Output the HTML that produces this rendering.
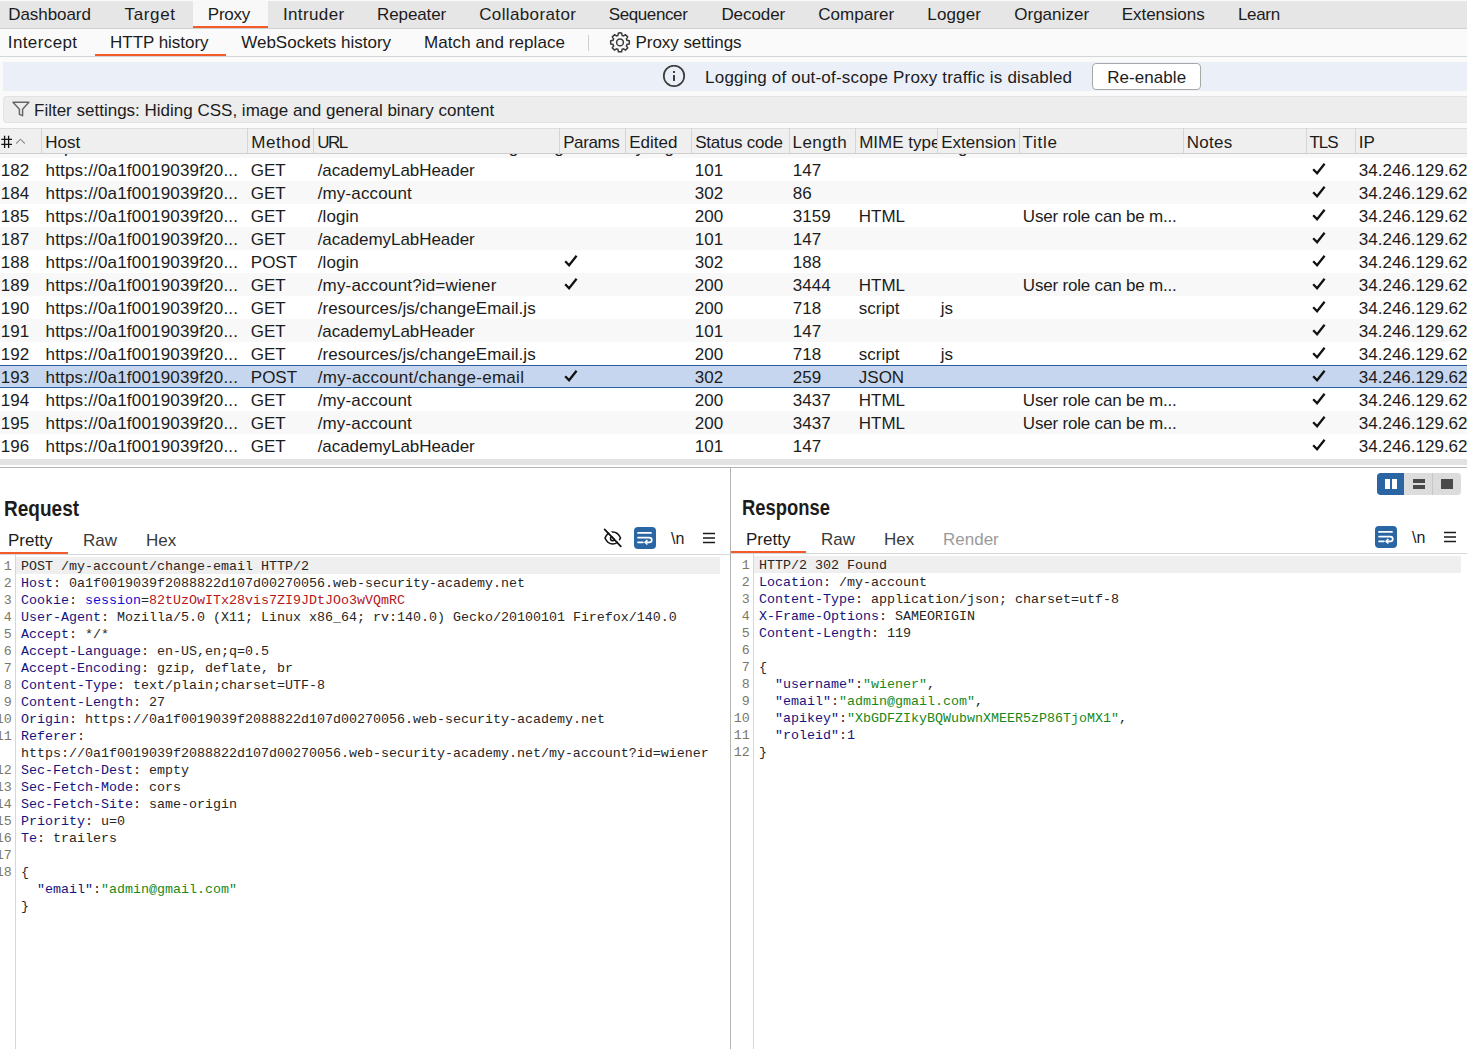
<!DOCTYPE html>
<html><head><meta charset="utf-8"><style>
*{margin:0;padding:0;box-sizing:border-box}
html,body{width:1467px;height:1049px;overflow:hidden;background:#fafafa}
body{position:relative;font-family:"Liberation Sans",sans-serif;font-size:17px;color:#1c1c1c}
.a{position:absolute;white-space:nowrap}
.t{position:absolute;white-space:nowrap;line-height:20px}
.ul{position:absolute;height:2px;background:#f45b2b}
.row{position:absolute;left:0;width:1467px;height:23px;overflow:hidden}
.c{position:absolute;top:3px;line-height:20px;white-space:nowrap}
.code{font-family:"Liberation Mono",monospace;font-size:13.33px;line-height:17px;white-space:pre;position:absolute;color:#262626}
.ln{position:absolute;font-family:"Liberation Mono",monospace;font-size:13.33px;line-height:17px;color:#7d7768;text-align:right;white-space:pre}
.k{color:#14147e}
.s{color:#0b0bd6}
.r{color:#b5161b}
.gr{color:#18881a}
</style></head><body>
<div class="a" style="left:0px;top:0px;width:1467px;height:1px;background:#fafafa"></div>
<div class="a" style="left:0px;top:1px;width:1467px;height:27px;background:#e6e6e6"></div>
<div class="a" style="left:0px;top:28px;width:1467px;height:1px;background:#cdd2d2"></div>
<div class="a" style="left:193px;top:1px;width:75px;height:27px;background:#f8f8f8"></div>
<div class="a" style="left:193px;top:26px;width:75px;height:2px;background:#f45b2b"></div>
<div class="t" style="left:8.2px;top:5px;letter-spacing:-0.06px">Dashboard</div>
<div class="t" style="left:124.6px;top:5px;letter-spacing:0.62px">Target</div>
<div class="t" style="left:207.8px;top:5px;letter-spacing:-0.25px">Proxy</div>
<div class="t" style="left:282.9px;top:5px;letter-spacing:0.39px">Intruder</div>
<div class="t" style="left:377.1px;top:5px;letter-spacing:-0.12px">Repeater</div>
<div class="t" style="left:479.2px;top:5px;letter-spacing:0.37px">Collaborator</div>
<div class="t" style="left:608.7px;top:5px;letter-spacing:-0.39px">Sequencer</div>
<div class="t" style="left:721.4px;top:5px;letter-spacing:-0.07px">Decoder</div>
<div class="t" style="left:818.2px;top:5px;letter-spacing:0.07px">Comparer</div>
<div class="t" style="left:927.3px;top:5px;letter-spacing:0.14px">Logger</div>
<div class="t" style="left:1014.2px;top:5px;letter-spacing:0.03px">Organizer</div>
<div class="t" style="left:1121.7px;top:5px;letter-spacing:-0.02px">Extensions</div>
<div class="t" style="left:1238.0px;top:5px;letter-spacing:-0.33px">Learn</div>
<div class="a" style="left:0px;top:29px;width:1467px;height:27px;background:#fafafa"></div>
<div class="a" style="left:0px;top:56px;width:1467px;height:1px;background:#d3d7d7"></div>
<div class="a" style="left:95px;top:54px;width:131px;height:2px;background:#f45b2b"></div>
<div class="t" style="left:7.8px;top:33px;letter-spacing:0.39px">Intercept</div>
<div class="t" style="left:110.1px;top:33px;letter-spacing:-0.04px">HTTP history</div>
<div class="t" style="left:241.2px;top:33px;letter-spacing:0.0px">WebSockets history</div>
<div class="t" style="left:424.1px;top:33px;letter-spacing:0.06px">Match and replace</div>
<div class="t" style="left:635.5px;top:33px;letter-spacing:-0.05px">Proxy settings</div>
<div class="a" style="left:588px;top:35px;width:1px;height:16px;background:#d0d0d0"></div>
<svg class="a" style="left:608px;top:30.5px" width="24" height="22" viewBox="0 0 24 22"><g fill="none" stroke="#3a3a3a" stroke-width="1.5"><path d="M12 1.8l1.6.3.5 2.3 1.4.6 2-1.3 2.2 2.2-1.3 2 .6 1.4 2.3.5v3.2l-2.3.5-.6 1.4 1.3 2-2.2 2.2-2-1.3-1.4.6-.5 2.3h-3.2l-.5-2.3-1.4-.6-2 1.3-2.2-2.2 1.3-2-.6-1.4-2.3-.5V9.8l2.3-.5.6-1.4-1.3-2 2.2-2.2 2 1.3 1.4-.6.5-2.3z" transform="translate(0,0)"/><circle cx="12" cy="11.4" r="3.4"/></g></svg>
<div class="a" style="left:3px;top:62px;width:1464px;height:29px;background:#ebeff7"></div>
<svg class="a" style="left:662px;top:65px" width="24" height="23" viewBox="0 0 24 23"><circle cx="12" cy="10.9" r="10.2" fill="none" stroke="#3c3c3c" stroke-width="1.7"/><rect x="11" y="9.9" width="2" height="6.1" rx="0.4" fill="#3c3c3c"/><rect x="11" y="5.9" width="2" height="2" rx="0.3" fill="#3c3c3c"/></svg>
<div class="t" style="left:705.1px;top:68px;letter-spacing:0.19px">Logging of out-of-scope Proxy traffic is disabled</div>
<div class="a" style="left:1092px;top:63px;width:109px;height:27px;background:#fff;border:1px solid #a8a8a8;border-radius:4px"></div>
<div class="t" style="left:1107.2px;top:68px;letter-spacing:0.06px">Re-enable</div>
<div class="a" style="left:3px;top:96px;width:1464px;height:27px;background:#ededed;border:1px solid #e3e3e3;border-right:none;border-radius:4px 0 0 4px"></div>
<svg class="a" style="left:12px;top:101px" width="18" height="16" viewBox="0 0 18 16"><path d="M1 1.3H16.9L10.6 8.2V14.7L7.4 13.3V8.2Z" fill="none" stroke="#666" stroke-width="1.45" stroke-linejoin="round"/></svg>
<div class="t" style="left:34px;top:101px;">Filter settings: Hiding CSS, image and general binary content</div>
<div class="a" style="left:0px;top:128px;width:1467px;height:25px;background:#efefef;border-top:1px solid #dedede"></div>
<div class="a" style="left:0px;top:153px;width:1467px;height:1px;background:#cfcfcf"></div>
<div class="a" style="left:41px;top:128px;width:1px;height:25px;background:#d5d5d5"></div>
<div class="a" style="left:247px;top:128px;width:1px;height:25px;background:#d5d5d5"></div>
<div class="a" style="left:313px;top:128px;width:1px;height:25px;background:#d5d5d5"></div>
<div class="a" style="left:559px;top:128px;width:1px;height:25px;background:#d5d5d5"></div>
<div class="a" style="left:625px;top:128px;width:1px;height:25px;background:#d5d5d5"></div>
<div class="a" style="left:691px;top:128px;width:1px;height:25px;background:#d5d5d5"></div>
<div class="a" style="left:789px;top:128px;width:1px;height:25px;background:#d5d5d5"></div>
<div class="a" style="left:855px;top:128px;width:1px;height:25px;background:#d5d5d5"></div>
<div class="a" style="left:937px;top:128px;width:1px;height:25px;background:#d5d5d5"></div>
<div class="a" style="left:1019px;top:128px;width:1px;height:25px;background:#d5d5d5"></div>
<div class="a" style="left:1183px;top:128px;width:1px;height:25px;background:#d5d5d5"></div>
<div class="a" style="left:1306px;top:128px;width:1px;height:25px;background:#d5d5d5"></div>
<div class="a" style="left:1355px;top:128px;width:1px;height:25px;background:#d5d5d5"></div>
<div class="t" style="left:2px;top:133px;letter-spacing:0px"></div>
<div class="t" style="left:45.2px;top:133px;letter-spacing:0px">Host</div>
<div class="t" style="left:251.2px;top:133px;letter-spacing:0.58px">Method</div>
<div class="t" style="left:317.2px;top:133px;letter-spacing:-1.5px">URL</div>
<div class="t" style="left:563.2px;top:133px;letter-spacing:-0.42px">Params</div>
<div class="t" style="left:629.2px;top:133px;letter-spacing:0px">Edited</div>
<div class="t" style="left:695.2px;top:133px;letter-spacing:-0.2px">Status code</div>
<div class="t" style="left:792.6px;top:133px;letter-spacing:0.4px">Length</div>
<div class="t" style="left:859.2px;top:133px;width:78px;overflow:hidden">MIME type</div>
<div class="t" style="left:941.2px;top:133px;letter-spacing:0px">Extension</div>
<div class="t" style="left:1022.6px;top:133px;letter-spacing:0.7px">Title</div>
<div class="t" style="left:1186.7px;top:133px;letter-spacing:0.3px">Notes</div>
<div class="t" style="left:1309.45px;top:133px;letter-spacing:-1.0px">TLS</div>
<div class="t" style="left:1358.7px;top:133px;letter-spacing:0px">IP</div>
<svg class="a" style="left:14px;top:136px" width="13" height="10" viewBox="0 0 13 10"><path d="M2.2 7.5L6.5 3.2l4.3 4.3" fill="none" stroke="#8c8c8c" stroke-width="1.1"/></svg>
<svg class="a" style="left:0px;top:134px" width="14" height="16" viewBox="0 0 14 16"><path d="M4.6 1.8V13.9M8.6 1.8V13.9M1.3 5.4H12M1.3 10.4H12" fill="none" stroke="#111" stroke-width="1.3"/></svg>
<div class="row" style="top:154px;height:4px;background:#f8f8f8"><div class="c" style="left:45px;top:-16px">https://0a1f0019039f20...</div><div class="c" style="left:317px;top:-16px">/resources/labheader/images/logoAcademy.svg</div><div class="c" style="left:941px;top:-16px">svg</div></div>
<div class="row" style="top:158px;background:#ffffff">
<div class="c" style="left:0.8px;top:3px;">182</div>
<div class="c" style="left:45.5px;top:3px;letter-spacing:0.18px">https://0a1f0019039f20...</div>
<div class="c" style="left:250.8px;top:3px;">GET</div>
<div class="c" style="left:317.7px;top:3px;letter-spacing:-0.05px">/academyLabHeader</div>
<div class="c" style="left:694.8px;top:3px;">101</div>
<div class="c" style="left:792.8px;top:3px;">147</div>
<div class="a" style="left:1310.5px;top:3px;line-height:0"><svg width="16" height="15" viewBox="0 0 16 15"><path d="M2.2 8.2L6.1 12.2L13.6 2.8" fill="none" stroke="#111" stroke-width="2.3"/></svg></div>
<div class="c" style="left:1358.8px;top:3px;">34.246.129.62</div>
</div>
<div class="row" style="top:181px;background:#f8f8f8">
<div class="c" style="left:0.8px;top:3px;">184</div>
<div class="c" style="left:45.5px;top:3px;letter-spacing:0.18px">https://0a1f0019039f20...</div>
<div class="c" style="left:250.8px;top:3px;">GET</div>
<div class="c" style="left:317.7px;top:3px;letter-spacing:0.15px">/my-account</div>
<div class="c" style="left:694.8px;top:3px;">302</div>
<div class="c" style="left:792.8px;top:3px;">86</div>
<div class="a" style="left:1310.5px;top:3px;line-height:0"><svg width="16" height="15" viewBox="0 0 16 15"><path d="M2.2 8.2L6.1 12.2L13.6 2.8" fill="none" stroke="#111" stroke-width="2.3"/></svg></div>
<div class="c" style="left:1358.8px;top:3px;">34.246.129.62</div>
</div>
<div class="row" style="top:204px;background:#ffffff">
<div class="c" style="left:0.8px;top:3px;">185</div>
<div class="c" style="left:45.5px;top:3px;letter-spacing:0.18px">https://0a1f0019039f20...</div>
<div class="c" style="left:250.8px;top:3px;">GET</div>
<div class="c" style="left:317.7px;top:3px;letter-spacing:0.1px">/login</div>
<div class="c" style="left:694.8px;top:3px;">200</div>
<div class="c" style="left:792.8px;top:3px;">3159</div>
<div class="c" style="left:858.8px;top:3px;">HTML</div>
<div class="c" style="left:1022.8px;top:3px;letter-spacing:-0.19px">User role can be m...</div>
<div class="a" style="left:1310.5px;top:3px;line-height:0"><svg width="16" height="15" viewBox="0 0 16 15"><path d="M2.2 8.2L6.1 12.2L13.6 2.8" fill="none" stroke="#111" stroke-width="2.3"/></svg></div>
<div class="c" style="left:1358.8px;top:3px;">34.246.129.62</div>
</div>
<div class="row" style="top:227px;background:#f8f8f8">
<div class="c" style="left:0.8px;top:3px;">187</div>
<div class="c" style="left:45.5px;top:3px;letter-spacing:0.18px">https://0a1f0019039f20...</div>
<div class="c" style="left:250.8px;top:3px;">GET</div>
<div class="c" style="left:317.7px;top:3px;letter-spacing:-0.05px">/academyLabHeader</div>
<div class="c" style="left:694.8px;top:3px;">101</div>
<div class="c" style="left:792.8px;top:3px;">147</div>
<div class="a" style="left:1310.5px;top:3px;line-height:0"><svg width="16" height="15" viewBox="0 0 16 15"><path d="M2.2 8.2L6.1 12.2L13.6 2.8" fill="none" stroke="#111" stroke-width="2.3"/></svg></div>
<div class="c" style="left:1358.8px;top:3px;">34.246.129.62</div>
</div>
<div class="row" style="top:250px;background:#ffffff">
<div class="c" style="left:0.8px;top:3px;">188</div>
<div class="c" style="left:45.5px;top:3px;letter-spacing:0.18px">https://0a1f0019039f20...</div>
<div class="c" style="left:250.8px;top:3px;">POST</div>
<div class="c" style="left:317.7px;top:3px;letter-spacing:0.1px">/login</div>
<div class="a" style="left:563px;top:3px;line-height:0"><svg width="16" height="15" viewBox="0 0 16 15"><path d="M2.2 8.2L6.1 12.2L13.6 2.8" fill="none" stroke="#111" stroke-width="2.3"/></svg></div>
<div class="c" style="left:694.8px;top:3px;">302</div>
<div class="c" style="left:792.8px;top:3px;">188</div>
<div class="a" style="left:1310.5px;top:3px;line-height:0"><svg width="16" height="15" viewBox="0 0 16 15"><path d="M2.2 8.2L6.1 12.2L13.6 2.8" fill="none" stroke="#111" stroke-width="2.3"/></svg></div>
<div class="c" style="left:1358.8px;top:3px;">34.246.129.62</div>
</div>
<div class="row" style="top:273px;background:#f8f8f8">
<div class="c" style="left:0.8px;top:3px;">189</div>
<div class="c" style="left:45.5px;top:3px;letter-spacing:0.18px">https://0a1f0019039f20...</div>
<div class="c" style="left:250.8px;top:3px;">GET</div>
<div class="c" style="left:317.7px;top:3px;letter-spacing:0.17px">/my-account?id=wiener</div>
<div class="a" style="left:563px;top:3px;line-height:0"><svg width="16" height="15" viewBox="0 0 16 15"><path d="M2.2 8.2L6.1 12.2L13.6 2.8" fill="none" stroke="#111" stroke-width="2.3"/></svg></div>
<div class="c" style="left:694.8px;top:3px;">200</div>
<div class="c" style="left:792.8px;top:3px;">3444</div>
<div class="c" style="left:858.8px;top:3px;">HTML</div>
<div class="c" style="left:1022.8px;top:3px;letter-spacing:-0.19px">User role can be m...</div>
<div class="a" style="left:1310.5px;top:3px;line-height:0"><svg width="16" height="15" viewBox="0 0 16 15"><path d="M2.2 8.2L6.1 12.2L13.6 2.8" fill="none" stroke="#111" stroke-width="2.3"/></svg></div>
<div class="c" style="left:1358.8px;top:3px;">34.246.129.62</div>
</div>
<div class="row" style="top:296px;background:#ffffff">
<div class="c" style="left:0.8px;top:3px;">190</div>
<div class="c" style="left:45.5px;top:3px;letter-spacing:0.18px">https://0a1f0019039f20...</div>
<div class="c" style="left:250.8px;top:3px;">GET</div>
<div class="c" style="left:317.7px;top:3px;letter-spacing:0.06px">/resources/js/changeEmail.js</div>
<div class="c" style="left:694.8px;top:3px;">200</div>
<div class="c" style="left:792.8px;top:3px;">718</div>
<div class="c" style="left:858.8px;top:3px;">script</div>
<div class="c" style="left:940.8px;top:3px;">js</div>
<div class="a" style="left:1310.5px;top:3px;line-height:0"><svg width="16" height="15" viewBox="0 0 16 15"><path d="M2.2 8.2L6.1 12.2L13.6 2.8" fill="none" stroke="#111" stroke-width="2.3"/></svg></div>
<div class="c" style="left:1358.8px;top:3px;">34.246.129.62</div>
</div>
<div class="row" style="top:319px;background:#f8f8f8">
<div class="c" style="left:0.8px;top:3px;">191</div>
<div class="c" style="left:45.5px;top:3px;letter-spacing:0.18px">https://0a1f0019039f20...</div>
<div class="c" style="left:250.8px;top:3px;">GET</div>
<div class="c" style="left:317.7px;top:3px;letter-spacing:-0.05px">/academyLabHeader</div>
<div class="c" style="left:694.8px;top:3px;">101</div>
<div class="c" style="left:792.8px;top:3px;">147</div>
<div class="a" style="left:1310.5px;top:3px;line-height:0"><svg width="16" height="15" viewBox="0 0 16 15"><path d="M2.2 8.2L6.1 12.2L13.6 2.8" fill="none" stroke="#111" stroke-width="2.3"/></svg></div>
<div class="c" style="left:1358.8px;top:3px;">34.246.129.62</div>
</div>
<div class="row" style="top:342px;background:#ffffff">
<div class="c" style="left:0.8px;top:3px;">192</div>
<div class="c" style="left:45.5px;top:3px;letter-spacing:0.18px">https://0a1f0019039f20...</div>
<div class="c" style="left:250.8px;top:3px;">GET</div>
<div class="c" style="left:317.7px;top:3px;letter-spacing:0.06px">/resources/js/changeEmail.js</div>
<div class="c" style="left:694.8px;top:3px;">200</div>
<div class="c" style="left:792.8px;top:3px;">718</div>
<div class="c" style="left:858.8px;top:3px;">script</div>
<div class="c" style="left:940.8px;top:3px;">js</div>
<div class="a" style="left:1310.5px;top:3px;line-height:0"><svg width="16" height="15" viewBox="0 0 16 15"><path d="M2.2 8.2L6.1 12.2L13.6 2.8" fill="none" stroke="#111" stroke-width="2.3"/></svg></div>
<div class="c" style="left:1358.8px;top:3px;">34.246.129.62</div>
</div>
<div class="row" style="top:365px;background:#c6d6ee;border-top:1px solid #2c5f9c;border-bottom:1px solid #2c5f9c">
<div class="c" style="left:0.8px;top:2px;">193</div>
<div class="c" style="left:45.5px;top:2px;letter-spacing:0.18px">https://0a1f0019039f20...</div>
<div class="c" style="left:250.8px;top:2px;">POST</div>
<div class="c" style="left:317.7px;top:2px;letter-spacing:0.3px">/my-account/change-email</div>
<div class="a" style="left:563px;top:2px;line-height:0"><svg width="16" height="15" viewBox="0 0 16 15"><path d="M2.2 8.2L6.1 12.2L13.6 2.8" fill="none" stroke="#111" stroke-width="2.3"/></svg></div>
<div class="c" style="left:694.8px;top:2px;">302</div>
<div class="c" style="left:792.8px;top:2px;">259</div>
<div class="c" style="left:858.8px;top:2px;">JSON</div>
<div class="a" style="left:1310.5px;top:2px;line-height:0"><svg width="16" height="15" viewBox="0 0 16 15"><path d="M2.2 8.2L6.1 12.2L13.6 2.8" fill="none" stroke="#111" stroke-width="2.3"/></svg></div>
<div class="c" style="left:1358.8px;top:2px;">34.246.129.62</div>
</div>
<div class="row" style="top:388px;background:#ffffff">
<div class="c" style="left:0.8px;top:3px;">194</div>
<div class="c" style="left:45.5px;top:3px;letter-spacing:0.18px">https://0a1f0019039f20...</div>
<div class="c" style="left:250.8px;top:3px;">GET</div>
<div class="c" style="left:317.7px;top:3px;letter-spacing:0.15px">/my-account</div>
<div class="c" style="left:694.8px;top:3px;">200</div>
<div class="c" style="left:792.8px;top:3px;">3437</div>
<div class="c" style="left:858.8px;top:3px;">HTML</div>
<div class="c" style="left:1022.8px;top:3px;letter-spacing:-0.19px">User role can be m...</div>
<div class="a" style="left:1310.5px;top:3px;line-height:0"><svg width="16" height="15" viewBox="0 0 16 15"><path d="M2.2 8.2L6.1 12.2L13.6 2.8" fill="none" stroke="#111" stroke-width="2.3"/></svg></div>
<div class="c" style="left:1358.8px;top:3px;">34.246.129.62</div>
</div>
<div class="row" style="top:411px;background:#f8f8f8">
<div class="c" style="left:0.8px;top:3px;">195</div>
<div class="c" style="left:45.5px;top:3px;letter-spacing:0.18px">https://0a1f0019039f20...</div>
<div class="c" style="left:250.8px;top:3px;">GET</div>
<div class="c" style="left:317.7px;top:3px;letter-spacing:0.15px">/my-account</div>
<div class="c" style="left:694.8px;top:3px;">200</div>
<div class="c" style="left:792.8px;top:3px;">3437</div>
<div class="c" style="left:858.8px;top:3px;">HTML</div>
<div class="c" style="left:1022.8px;top:3px;letter-spacing:-0.19px">User role can be m...</div>
<div class="a" style="left:1310.5px;top:3px;line-height:0"><svg width="16" height="15" viewBox="0 0 16 15"><path d="M2.2 8.2L6.1 12.2L13.6 2.8" fill="none" stroke="#111" stroke-width="2.3"/></svg></div>
<div class="c" style="left:1358.8px;top:3px;">34.246.129.62</div>
</div>
<div class="row" style="top:434px;background:#ffffff">
<div class="c" style="left:0.8px;top:3px;">196</div>
<div class="c" style="left:45.5px;top:3px;letter-spacing:0.18px">https://0a1f0019039f20...</div>
<div class="c" style="left:250.8px;top:3px;">GET</div>
<div class="c" style="left:317.7px;top:3px;letter-spacing:-0.05px">/academyLabHeader</div>
<div class="c" style="left:694.8px;top:3px;">101</div>
<div class="c" style="left:792.8px;top:3px;">147</div>
<div class="a" style="left:1310.5px;top:3px;line-height:0"><svg width="16" height="15" viewBox="0 0 16 15"><path d="M2.2 8.2L6.1 12.2L13.6 2.8" fill="none" stroke="#111" stroke-width="2.3"/></svg></div>
<div class="c" style="left:1358.8px;top:3px;">34.246.129.62</div>
</div>
<div class="a" style="left:0px;top:457px;width:1467px;height:10px;background:#ffffff"></div>
<div class="a" style="left:0px;top:459px;width:1467px;height:6px;background:#e3e3e3"></div>
<div class="a" style="left:0px;top:467px;width:1467px;height:1px;background:#b6b3b3"></div>
<div class="a" style="left:0px;top:468px;width:1467px;height:581px;background:#ffffff"></div>
<div class="a" style="left:730px;top:468px;width:1px;height:581px;background:#b3b3b3"></div>
<div class="a" style="left:4px;top:497px;font-weight:bold;font-size:21.5px;line-height:24px;transform:scaleX(0.885);transform-origin:0 0">Request</div>
<div class="t" style="left:8px;top:531px;">Pretty</div>
<div class="t" style="left:83.1px;top:531px;color:#3a3a3a">Raw</div>
<div class="t" style="left:146px;top:531px;color:#3a3a3a">Hex</div>
<div class="a" style="left:0px;top:552px;width:68px;height:2px;background:#f45b2b"></div>
<div class="a" style="left:0px;top:554px;width:730px;height:1px;background:#d3d8d8"></div>
<div class="a" style="left:15px;top:555px;width:1px;height:494px;background:#d6d6d6"></div>
<div class="a" style="left:16px;top:557px;width:704px;height:17px;background:#efefef"></div>
<div class="a" style="left:600px;top:525px;line-height:0"><svg width="26" height="26" viewBox="0 0 26 26"><path d="M5 13C8.5 5 17 5 20.5 13C17 21 8.5 21 5 13Z" fill="none" stroke="#111" stroke-width="1.6"/><circle cx="12.6" cy="13.6" r="2.1" fill="none" stroke="#111" stroke-width="1.5"/><path d="M6.1 2.9L22.3 19.9" stroke="#fff" stroke-width="2.2"/><path d="M4.6 4.3L20.8 21.3" stroke="#111" stroke-width="1.7" stroke-linecap="round"/></svg></div>
<div class="a" style="left:634px;top:527px;line-height:0"><svg width="22" height="22" viewBox="0 0 22 22"><rect width="22" height="22" rx="4" fill="#2a66a3"/><path d="M4 5.9H17M4 10.6H15.4A2.35 2.35 0 0 1 15.4 15.3H12.2M4 15.3H8.9" fill="none" stroke="#fff" stroke-width="1.7" stroke-linecap="round"/><path d="M13.4 13.1L11.1 15.3L13.4 17.5" fill="none" stroke="#fff" stroke-width="1.6"/></svg></div>
<div class="a" style="left:671px;top:529px;font-size:16px;line-height:20px;color:#1a1a1a">\n</div>
<div class="a" style="left:702px;top:532px;line-height:0"><svg width="14" height="12" viewBox="0 0 14 12"><path d="M1 1.5h12M1 6h12M1 10.5h12" stroke="#1a1a1a" stroke-width="1.6"/></svg></div>
<div class="ln" style="left:-18.2px;top:558px;width:30px">1
2
3
4
5
6
7
8
9
10
11

12
13
14
15
16
17
18

</div>
<div class="code" style="left:21px;top:558px">POST /my-account/change-email HTTP/2
<span class="k">Host</span>: 0a1f0019039f2088822d107d00270056.web-security-academy.net
<span class="k">Cookie</span>: <span class="s">session</span>=<span class="r">82tUzOwITx28vis7ZI9JDtJOo3wVQmRC</span>
<span class="k">User-Agent</span>: Mozilla/5.0 (X11; Linux x86_64; rv:140.0) Gecko/20100101 Firefox/140.0
<span class="k">Accept</span>: */*
<span class="k">Accept-Language</span>: en-US,en;q=0.5
<span class="k">Accept-Encoding</span>: gzip, deflate, br
<span class="k">Content-Type</span>: text/plain;charset=UTF-8
<span class="k">Content-Length</span>: 27
<span class="k">Origin</span>: https://0a1f0019039f2088822d107d00270056.web-security-academy.net
<span class="k">Referer</span>:
https://0a1f0019039f2088822d107d00270056.web-security-academy.net/my-account?id=wiener
<span class="k">Sec-Fetch-Dest</span>: empty
<span class="k">Sec-Fetch-Mode</span>: cors
<span class="k">Sec-Fetch-Site</span>: same-origin
<span class="k">Priority</span>: u=0
<span class="k">Te</span>: trailers

{
  <span class="k">&quot;email&quot;</span>:<span class="gr">&quot;admin@gmail.com&quot;</span>
}</div>
<div class="a" style="left:742px;top:496px;font-weight:bold;font-size:21.5px;line-height:24px;transform:scaleX(0.855);transform-origin:0 0">Response</div>
<div class="t" style="left:746px;top:530px;">Pretty</div>
<div class="t" style="left:821px;top:530px;color:#3a3a3a">Raw</div>
<div class="t" style="left:884.1px;top:530px;color:#3a3a3a">Hex</div>
<div class="t" style="left:943px;top:530px;color:#9a9a9a">Render</div>
<div class="a" style="left:731px;top:551px;width:75px;height:2px;background:#f45b2b"></div>
<div class="a" style="left:731px;top:553px;width:736px;height:1px;background:#d3d8d8"></div>
<div class="a" style="left:753px;top:554px;width:1px;height:495px;background:#d6d6d6"></div>
<div class="a" style="left:754px;top:556px;width:707px;height:17px;background:#efefef"></div>
<div class="a" style="left:1377px;top:473px;width:84px;height:22px;border-radius:4px;background:#dcdcdc;overflow:hidden">
<div class="a" style="left:0;top:0;width:27px;height:22px;background:#2b65a4"></div>
<div class="a" style="left:55px;top:0;width:1px;height:22px;background:#c8c8c8"></div>
<div class="a" style="left:8px;top:6px;width:5px;height:10px;background:#fff"></div>
<div class="a" style="left:15px;top:6px;width:5px;height:10px;background:#fff"></div>
<div class="a" style="left:36px;top:6px;width:12px;height:3.5px;background:#4a4a4a"></div>
<div class="a" style="left:36px;top:12.3px;width:12px;height:3.7px;background:#4a4a4a"></div>
<div class="a" style="left:64px;top:6px;width:12px;height:10px;background:#4a4a4a"></div>
</div>
<div class="a" style="left:1375px;top:526px;line-height:0"><svg width="22" height="22" viewBox="0 0 22 22"><rect width="22" height="22" rx="4" fill="#2a66a3"/><path d="M4 5.9H17M4 10.6H15.4A2.35 2.35 0 0 1 15.4 15.3H12.2M4 15.3H8.9" fill="none" stroke="#fff" stroke-width="1.7" stroke-linecap="round"/><path d="M13.4 13.1L11.1 15.3L13.4 17.5" fill="none" stroke="#fff" stroke-width="1.6"/></svg></div>
<div class="a" style="left:1412px;top:528px;font-size:16px;line-height:20px;color:#1a1a1a">\n</div>
<div class="a" style="left:1443px;top:531px;line-height:0"><svg width="14" height="12" viewBox="0 0 14 12"><path d="M1 1.5h12M1 6h12M1 10.5h12" stroke="#1a1a1a" stroke-width="1.6"/></svg></div>
<div class="ln" style="left:719.8px;top:557px;width:30px">1
2
3
4
5
6
7
8
9
10
11
12</div>
<div class="code" style="left:759px;top:557px">HTTP/2 302 Found
<span class="k">Location</span>: /my-account
<span class="k">Content-Type</span>: application/json; charset=utf-8
<span class="k">X-Frame-Options</span>: SAMEORIGIN
<span class="k">Content-Length</span>: 119

{
  <span class="k">&quot;username&quot;</span>:<span class="gr">&quot;wiener&quot;</span>,
  <span class="k">&quot;email&quot;</span>:<span class="gr">&quot;admin@gmail.com&quot;</span>,
  <span class="k">&quot;apikey&quot;</span>:<span class="gr">&quot;XbGDFZIkyBQWubwnXMEER5zP86TjoMX1&quot;</span>,
  <span class="k">&quot;roleid&quot;</span>:<span class="k">1</span>
}</div>
</body></html>
